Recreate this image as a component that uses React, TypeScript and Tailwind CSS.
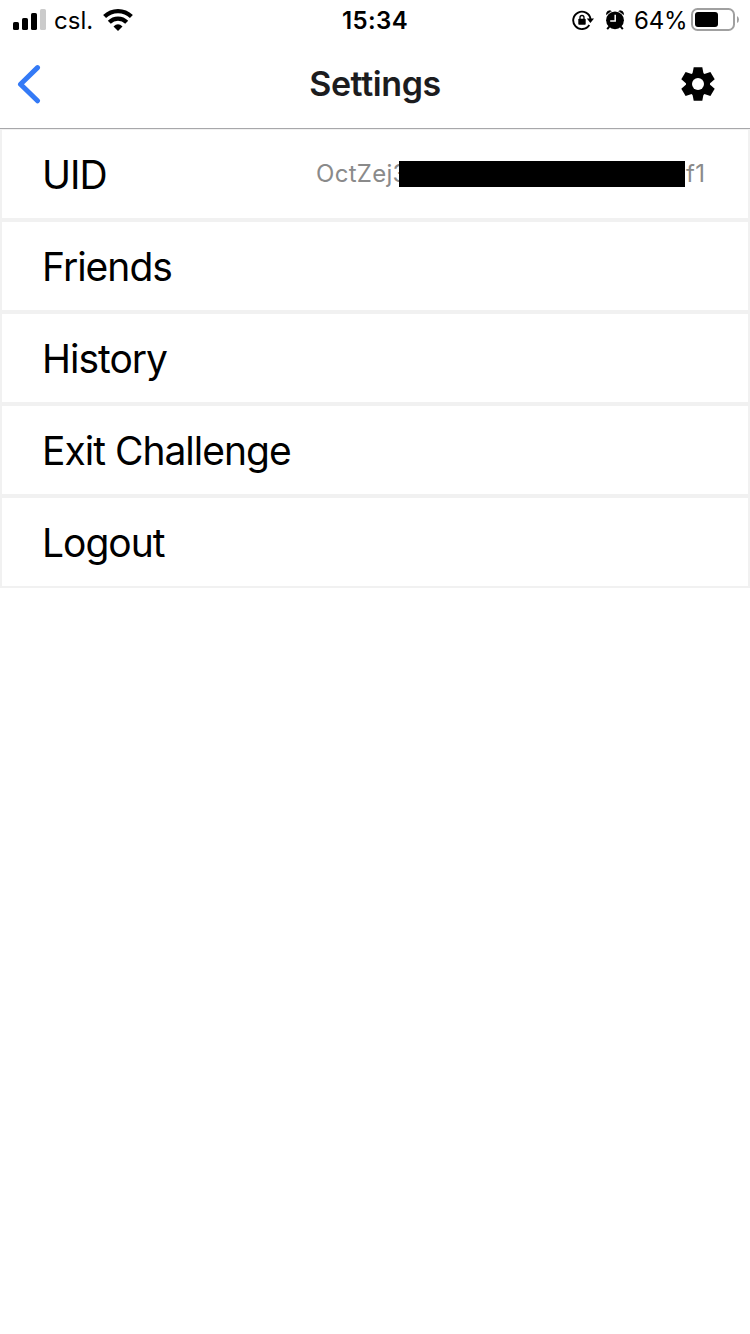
import React from 'react';

const items: string[] = ['Friends', 'History', 'Exit Challenge', 'Logout'];

function Signal() {
  return (
    <svg className="ml-[13px] h-[22px] w-[34px]" viewBox="0 0 34 22">
      <rect x="0" y="13" width="6" height="8" rx="1.6" />
      <rect x="9" y="9" width="6" height="12" rx="1.6" />
      <rect x="18" y="4" width="6" height="17" rx="1.6" />
      <rect x="27" y="0" width="6" height="21" rx="1.6" fill="#cbcbcb" />
    </svg>
  );
}

function Wifi() {
  return (
    <svg className="h-[22px] w-[30px]" viewBox="0 0 30 22">
      <g fill="none" stroke="#000" strokeWidth="4.2">
        <path d="M1.600 7.600C9 .3 21 .3 28.400 7.600" />
        <path d="M6.300 13.300C11.200 8.400 18.800 8.400 23.700 13.300" />
      </g>
      <path d="M10.500 17.400Q15 13.300 19.500 17.400L15 21.900Z" />
    </svg>
  );
}

function RotationLock() {
  return (
    <svg className="h-[22px] w-[22px]" viewBox="0 0 22 22">
      <path d="M17.300 16A8.700 8.700 0 1 1 18.500 10" fill="none" stroke="#000" strokeWidth="1.900" />
      <path d="M14.800 9.400H22L18.400 13.900Z" />
      <rect x="6.300" y="9.700" width="7.400" height="6" rx="0.800" />
      <path d="M8 10.500V8.500a2 2 0 0 1 4 0V10.500" fill="none" stroke="#000" strokeWidth="1.300" />
    </svg>
  );
}

function Alarm() {
  return (
    <svg className="h-[22px] w-[20px]" viewBox="0 0 20 22">
      <circle cx="10" cy="11.300" r="8.900" />
      <path d="M1.200 6.200V4Q2 1.400 5 1.200L6.800 2.200ZM18.800 6.200V4Q18 1.400 15 1.200L13.200 2.200Z" />
      <path d="M1.600 6L6.300 2.300M18.400 6L13.700 2.300" stroke="#fff" strokeWidth="0.400" />
      <path d="M4.300 17.700L2.200 20.200M15.700 17.700L17.800 20.200" fill="none" stroke="#000" strokeWidth="2" />
      <path d="M10.200 5.700V12H5.200" fill="none" stroke="#fff" strokeWidth="1.500" />
    </svg>
  );
}

function Battery() {
  return (
    <svg className="h-[24px] w-[50px]" viewBox="0 0 50 24">
      <rect x="1" y="1" width="42" height="21" rx="5.500" fill="#fff" stroke="#a0a0a0" strokeWidth="2" />
      <rect x="4" y="4" width="23" height="15" rx="3" />
      <path d="M46 8Q48 9 48 11.500T46 15Z" fill="#a0a0a0" />
    </svg>
  );
}

function Gear() {
  const bar = 'M-4.300 -16.800H4.300L5.800 -9V9L4.300 16.800H-4.300L-5.800 9V-9Z';
  return (
    <svg className="ml-[28px] h-[40px] w-[40px]" viewBox="-20 -20 40 40">
      <circle r="12" />
      <path d={bar} />
      <path d={bar} transform="rotate(60)" />
      <path d={bar} transform="rotate(120)" />
      <circle r="6" fill="#fff" />
    </svg>
  );
}

export default function App() {
  return (
    <div className="min-h-[1334px] w-[750px] overflow-hidden bg-white font-['Inter',sans-serif] text-black">
      <header className="h-[129px] border-b border-[#a7a7aa]">
        <div className="grid h-10 grid-cols-[300px_150px_300px] items-center">
          <div className="flex h-10 items-center">
            <Signal />
            <span className="ml-[7px] mr-[11px] h-10 w-[38px] whitespace-nowrap pt-px text-[24px] leading-10">csl.</span>
            <Wifi />
          </div>
          <div className="h-10 pt-px text-center text-[24px] font-semibold leading-10 tracking-[0.4px]">15:34</div>
          <div className="flex h-10 items-center justify-end pr-[9px]">
            <RotationLock />
            <span className="w-[11px]" />
            <Alarm />
            <span className="ml-[9px] mr-[4px] h-10 w-[53px] whitespace-nowrap pt-px text-[24px] leading-10 tracking-[-0.2px]">64%</span>
            <Battery />
          </div>
        </div>
        <div className="grid h-[88px] grid-cols-[100px_550px_100px] items-center">
          <svg className="ml-[17px] h-[40px] w-[24px]" viewBox="0 0 24 40" fill="none" stroke="#347af6" strokeWidth="5" strokeLinecap="round" strokeLinejoin="round">
            <path d="M20.500 3.600L3.500 20.200L20.500 36.800" />
          </svg>
          <h1 className="text-center text-[34px] font-semibold leading-[88px] tracking-[-0.4px] text-[#1c1c1e]">Settings</h1>
          <Gear />
        </div>
      </header>
      <main className="flex flex-col text-[39px] tracking-[-1px]">
        <section className="flex h-[91px] items-center justify-between border-2 border-t border-[#f1f1f1] pl-10 pr-[42px]">
          <span className="pt-[3px]">UID</span>
          <div className="flex h-full items-center text-[24px] tracking-[0.3px] text-[#8a8a8a]">
            <span className="w-[83px] whitespace-nowrap">OctZej3</span>
            <span className="relative h-[26px] w-[286px] bg-black" />
            <span className="w-[21px] whitespace-nowrap pl-px">f1</span>
          </div>
        </section>
        {items.map((label) => (
          <section key={label} className="flex h-[92px] items-center border-2 border-[#f1f1f1] pl-10 pt-[3px]">
            {label}
          </section>
        ))}
      </main>
    </div>
  );
}
